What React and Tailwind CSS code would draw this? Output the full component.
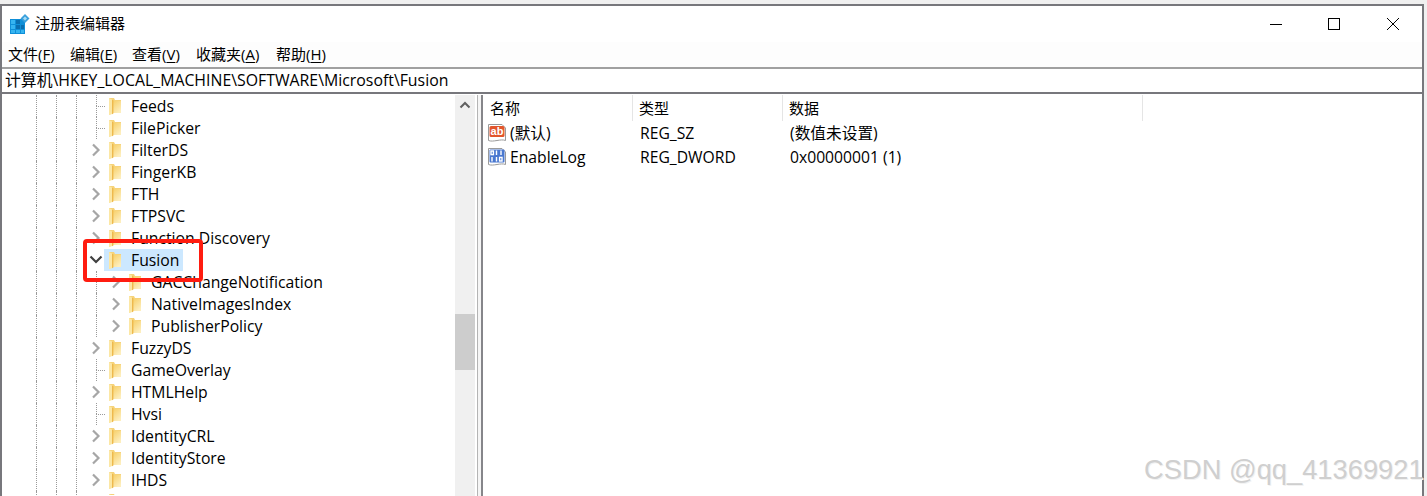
const FONT = "font-['Open_Sans','Noto_Sans_CJK_SC',sans-serif]";

function Folder() {
  return (
    <svg width="12" height="17" viewBox="0 0 12 17" className="shrink-0">
      <defs>
        <linearGradient id="fg" x1="0" y1="0" x2="0.6" y2="1">
          <stop offset="0" stopColor="#f7d06a" />
          <stop offset="1" stopColor="#fdeebd" />
        </linearGradient>
      </defs>
      <path d="M0 0H5L6 2H12V15H0Z" fill="#f6d37a" />
      <path d="M4 3H12V15H4Z" fill="url(#fg)" />
      <path d="M0 0L4 2V15.5L1 17H0Z" fill="#fce7a4" />
      <path d="M3 1.5L4.4 2.2V15.5L3 16.2Z" fill="#eeb94d" />
    </svg>
  );
}

function Chevron({ open }) {
  return open ? (
    <svg width="14" height="10" viewBox="0 0 14 10"><path d="M1.5 1.5L7 7L12.5 1.5" fill="none" stroke="#404040" strokeWidth="2.2" /></svg>
  ) : (
    <svg width="10" height="14" viewBox="0 0 10 14"><path d="M2 1.5L7.5 7L2 12.5" fill="none" stroke="#a6a6a6" strokeWidth="2.2" /></svg>
  );
}

function Guide({ w }) {
  return <div className={`h-full shrink-0 border-l border-dotted border-[#9a9a9a] ${w === 10 ? "w-[10px]" : "w-[20px]"}`} />;
}

function TreeRow({ label, kind, depth = 1, selected = false }) {
  return (
    <div className="flex h-[22px] items-center text-[15.75px] text-black">
      <div className="h-full w-[36px] shrink-0" />
      <Guide w={20} />
      <Guide w={20} />
      {depth === 1 ? <Guide w={10} /> : <><Guide w={20} /><Guide w={10} /></>}
      <div className="relative flex h-full w-[20px] shrink-0 items-center justify-center">
        {kind === "leaf" ? (
          <>
            <div className="absolute left-[10px] top-0 h-[11px] border-l border-dotted border-[#9a9a9a]" />
            <div className="absolute left-[10px] top-[11px] w-[9px] border-t border-dotted border-[#9a9a9a]" />
            <div className="absolute bottom-0 left-[10px] h-[11px] border-l border-dotted border-[#9a9a9a]" />
          </>
        ) : kind === "closed" ? (
          <Chevron />
        ) : kind === "open" ? (
          <Chevron open />
        ) : null}
      </div>
      {selected ? (
        <div className="-ml-[2px] flex h-full items-center bg-[#cce8ff] pl-[5px] pr-[4px]">
          <Folder />
          <span className="ml-[10px] pt-[2px]">{label}</span>
        </div>
      ) : (
        <div className="ml-[3px] flex h-full items-center">
          <Folder />
          <span className="ml-[10px] whitespace-nowrap pt-[2px]">{label}</span>
        </div>
      )}
    </div>
  );
}

const rows = [
  ["Feeds", "leaf"],
  ["FilePicker", "leaf"],
  ["FilterDS", "closed"],
  ["FingerKB", "closed"],
  ["FTH", "closed"],
  ["FTPSVC", "closed"],
  ["Function Discovery", "closed"],
  ["Fusion", "open", 1, true],
  ["GACChangeNotification", "closed", 2],
  ["NativeImagesIndex", "closed", 2],
  ["PublisherPolicy", "closed", 2],
  ["FuzzyDS", "closed"],
  ["GameOverlay", "leaf"],
  ["HTMLHelp", "closed"],
  ["Hvsi", "leaf"],
  ["IdentityCRL", "closed"],
  ["IdentityStore", "closed"],
  ["IHDS", "closed"],
  ["", "closed"],
];

function Menu({ label, k, w }) {
  return (
    <span className={`whitespace-nowrap ${w}`}>
      {label}(<span className="underline underline-offset-2">{k}</span>)
    </span>
  );
}

function AppIcon() {
  return (
    <svg width="20" height="20" viewBox="0 0 20 20" className="shrink-0">
      <rect x="0" y="5" width="15" height="15" fill="#0f8fd8" />
      <g fill="#35b4f0">
        <rect x="1" y="6" width="4" height="4" />
        <rect x="1" y="11" width="4" height="4" />
        <rect x="1" y="16" width="4" height="3" />
        <rect x="6" y="16" width="4" height="3" />
        <rect x="11" y="16" width="3" height="3" />
      </g>
      <g fill="#0a6fb0">
        <rect x="6" y="6" width="4" height="4" />
        <rect x="6" y="11" width="4" height="4" />
        <rect x="11" y="11" width="3" height="4" />
      </g>
      <path d="M15 0L19.5 4.5L15 9L10.5 4.5Z" fill="#3aa0dc" />
      <path d="M15 2.5L17 4.5L15 6.5L13 4.5Z" fill="#a8dcf5" />
    </svg>
  );
}

function AbIcon() {
  return (
    <svg width="20" height="20" viewBox="0 0 20 20" className="shrink-0">
      <path d="M1.5 1.5H15L18.5 5V17.5C14 15.5 6 19.5 1.5 17.5Z" fill="#fff" stroke="#9a9a9a" />
      <rect x="2.5" y="3" width="15" height="11" rx="1.5" fill="#e2562c" />
      <text x="10" y="12" textAnchor="middle" fontSize="11" fontWeight="700" fill="#fff" fontFamily="'Liberation Sans',sans-serif">ab</text>
    </svg>
  );
}

function BinIcon() {
  return (
    <svg width="20" height="20" viewBox="0 0 20 20" className="shrink-0">
      <path d="M1.5 1.5H15L18.5 5V17.5C14 15.5 6 19.5 1.5 17.5Z" fill="#fff" stroke="#9a9a9a" />
      <rect x="2.5" y="2.5" width="15" height="13" rx="1" fill="#4a78d0" />
      <g fill="none" stroke="#fff" strokeWidth="1.4">
        <rect x="4" y="4" width="2.4" height="3.6" />
        <path d="M9.5 3.5V8M14 3.5V8M5 10V14.5M9.5 10V14.5" />
        <rect x="12.6" y="10.4" width="2.4" height="3.6" />
      </g>
    </svg>
  );
}

export default function App() {
  return (
    <div className={`relative h-[496px] w-[1427px] overflow-hidden bg-[#f0f0f0] pt-[4px] pr-[3px] ${FONT}`}>
      <div className="flex h-[492px] flex-col border-l-2 border-r-2 border-t-2 border-[#77777c] bg-white">
        <div className="flex h-[36px] shrink-0 items-center pl-[8px]">
          <AppIcon />
          <span className="ml-[5px] pb-[2px] text-[15px] text-black">注册表编辑器</span>
          <div className="ml-auto flex h-full items-center pr-[23px]">
            <svg width="12" height="12" viewBox="0 0 12 12" className="mr-[46px]"><path d="M0 6.5H12" stroke="#000" /></svg>
            <svg width="12" height="12" viewBox="0 0 12 12" className="mr-[47px]"><rect x="0.5" y="0.5" width="11" height="11" fill="none" stroke="#000" /></svg>
            <svg width="12" height="12" viewBox="0 0 12 12"><path d="M0 0L12 12M12 0L0 12" stroke="#000" /></svg>
          </div>
        </div>
        <div className="flex h-[25px] shrink-0 items-center bg-[#fdfdfd] pl-[6px] text-[15px] text-black">
          <Menu label="文件" k="F" w="w-[62px]" />
          <Menu label="编辑" k="E" w="w-[62px]" />
          <Menu label="查看" k="V" w="w-[64px]" />
          <Menu label="收藏夹" k="A" w="w-[80px]" />
          <Menu label="帮助" k="H" w="w-[60px]" />
        </div>
        <div className="flex h-[27px] shrink-0 items-center border-y-2 border-b-[#77777c] border-t-[#a0a0a0] pl-[3px] text-[15.85px] text-black">
          计算机\HKEY_LOCAL_MACHINE\SOFTWARE\Microsoft\Fusion
        </div>
        <div className="flex min-h-0 flex-1 pt-[1px]">
          <div className="relative h-[400px] w-[455px] shrink-0 -ml-[2px] overflow-hidden">
            {rows.map(([label, kind, depth, sel], i) => (
              <TreeRow key={i} label={label} kind={kind} depth={depth} selected={sel} />
            ))}
          </div>
          <div className="flex w-[20px] shrink-0 flex-col items-center bg-[#f0f0f0]">
            <div className="flex h-[20px] items-center justify-center">
              <svg width="12" height="8" viewBox="0 0 12 8"><path d="M1.5 6.5L6 2L10.5 6.5" fill="none" stroke="#606060" strokeWidth="2" /></svg>
            </div>
            <div className="mt-[199px] h-[56px] w-full bg-[#cdcdcd]" />
          </div>
          <div className="ml-[2px] w-[1px] shrink-0 bg-[#b4b4b4]" />
          <div className="w-[3px] shrink-0 bg-[#f5f5f5]" />
          <div className="w-[2px] shrink-0 bg-[#86868a]" />
          <div className="min-w-0 flex-1 text-[15.7px] text-black">
            <div className="flex h-[26px] items-center text-[15px]">
              <div className="h-full w-[150px] border-r border-[#e5e5e5] pl-[7px] leading-[26px]">名称</div>
              <div className="h-full w-[150px] border-r border-[#e5e5e5] pl-[6px] leading-[26px]">类型</div>
              <div className="h-full w-[360px] border-r border-[#e5e5e5] pl-[6px] leading-[26px]">数据</div>
            </div>
            <div className="flex h-[24px] items-center pl-[4px]">
              <AbIcon />
              <span className="ml-[3px] w-[130px] pt-[2px]">(默认)</span>
              <span className="w-[150px] pt-[2px]">REG_SZ</span>
              <span className="pt-[2px]">(数值未设置)</span>
            </div>
            <div className="flex h-[24px] items-center pl-[4px]">
              <BinIcon />
              <span className="ml-[3px] w-[130px] pt-[2px]">EnableLog</span>
              <span className="w-[150px] pt-[2px]">REG_DWORD</span>
              <span className="pt-[2px]">0x00000001 (1)</span>
            </div>
          </div>
        </div>
      </div>
      <div className="absolute left-[83px] top-[239px] h-[43px] w-[120px] rounded-[4px] border-4 border-[#ff1c10]" />
      <div className="absolute left-[1144px] top-[453px] font-['Liberation_Sans',sans-serif] text-[27.3px] leading-[34px] whitespace-nowrap text-[#cfcfcf] [text-shadow:1px_1px_0_#f2f2f2]">CSDN @qq_41369921</div>
    </div>
  );
}
